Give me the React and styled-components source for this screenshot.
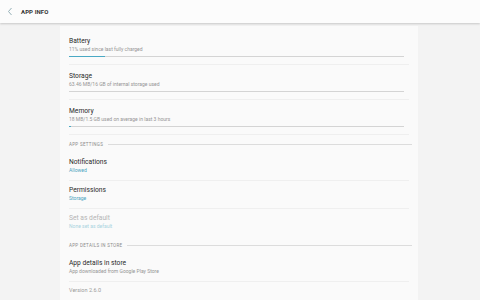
import React from "react";
import styled, { createGlobalStyle } from "styled-components";

const Global = createGlobalStyle`
  html, body { margin: 0; padding: 0; height: 100%; }
  body { background: #f3f3f3; font-family: Roboto, "Noto Sans", sans-serif; overflow: hidden; }
  #root { height: 100%; }
`;

const Page = styled.div`
  width: 480px;
  height: 300px;
  display: flex;
  flex-direction: column;
  background: #f3f3f3;
  overflow: hidden;
`;

const Header = styled.div`
  height: 23px;
  flex: none;
  background: #fcfcfc;
  display: flex;
  align-items: center;
  padding-left: 7px;
  gap: 8px;
  box-shadow: 0 1px 2px rgba(0,0,0,0.18);
  position: relative;
  z-index: 1;
`;

const Title = styled.div`
  font-size: 6px;
  font-weight: 700;
  color: #333;
  letter-spacing: 0.1px;
`;

const Card = styled.div`
  margin: 3px 0 0 60px;
  width: 358px;
  flex: 1;
  background: #fafafa;
  padding: 0 9px;
  box-sizing: border-box;
  display: flex;
  flex-direction: column;
`;

const Row = styled.div`
  height: ${p => p.$h}px;
  padding-top: ${p => p.$top}px;
  box-sizing: border-box;
  border-bottom: ${p => (p.$last ? "none" : "1px solid #efefef")};
  display: flex;
  flex-direction: column;
  flex: none;
`;

const RowTitle = styled.div`
  font-size: 6.7px;
  line-height: 9px;
  color: ${p => (p.$disabled ? "#b5b5b5" : "#2a2a2a")};
`;

const RowSub = styled.div`
  font-size: 5px;
  line-height: 7px;
  color: ${p => p.$color || "#959595"};
`;

const Bar = styled.div`
  margin-top: 3px;
  height: 1px;
  width: 335px;
  background: #d4d4d4;
`;

const Fill = styled.div`
  height: 1px;
  background: #4aa9c4;
`;

const Section = styled.div`
  height: ${p => p.$h}px;
  flex: none;
  display: flex;
  align-items: center;
  gap: 5px;
`;

const SectionLabel = styled.div`
  font-size: 4.5px;
  color: #8a8a8a;
  letter-spacing: 0.3px;
  white-space: nowrap;
`;

const SectionLine = styled.div`
  flex: 1;
  height: 1px;
  background: #dcdcdc;
  margin-right: -3px;
`;

const Version = styled.div`
  font-size: 5.5px;
  line-height: 7px;
  color: #9a9a9a;
  padding-top: 5px;
`;

const usage = [
  { t: "Battery", s: "11% used since last fully charged", f: 36, h: 39, top: 11 },
  { t: "Storage", s: "63.46 MB/16 GB of internal storage used", f: 0, h: 35, top: 7 },
  { t: "Memory", s: "18 MB/1.5 GB used on average in last 3 hours", f: 2, h: 35, top: 7 },
];

export default function App() {
  return (
    <Page>
      <Global />
      <Header>
        <svg width="6" height="9" viewBox="0 0 6 9">
          <path d="M4.5 1 L1.5 4.5 L4.5 8" fill="none" stroke="#8aa8b0" strokeWidth="0.9" />
        </svg>
        <Title>APP INFO</Title>
      </Header>
      <Card>
        {usage.map(u => (
          <Row key={u.t} $h={u.h} $top={u.top}>
            <RowTitle>{u.t}</RowTitle>
            <RowSub>{u.s}</RowSub>
            <Bar>
              <Fill style={{ width: u.f + "px" }} />
            </Bar>
          </Row>
        ))}
        <Section $h={18}>
          <SectionLabel>APP SETTINGS</SectionLabel>
          <SectionLine />
        </Section>
        <Row $h={28} $top={4.5}>
          <RowTitle>Notifications</RowTitle>
          <RowSub $color="#4aa3bf">Allowed</RowSub>
        </Row>
        <Row $h={28} $top={4.5}>
          <RowTitle>Permissions</RowTitle>
          <RowSub $color="#4aa3bf">Storage</RowSub>
        </Row>
        <Row $h={28} $top={4.5} $last>
          <RowTitle $disabled>Set as default</RowTitle>
          <RowSub $color="#a9d3e0">None set as default</RowSub>
        </Row>
        <Section $h={17}>
          <SectionLabel>APP DETAILS IN STORE</SectionLabel>
          <SectionLine />
        </Section>
        <Row $h={28} $top={4.5}>
          <RowTitle>App details in store</RowTitle>
          <RowSub>App downloaded from Google Play Store</RowSub>
        </Row>
        <Version>Version 2.6.0</Version>
      </Card>
    </Page>
  );
}
